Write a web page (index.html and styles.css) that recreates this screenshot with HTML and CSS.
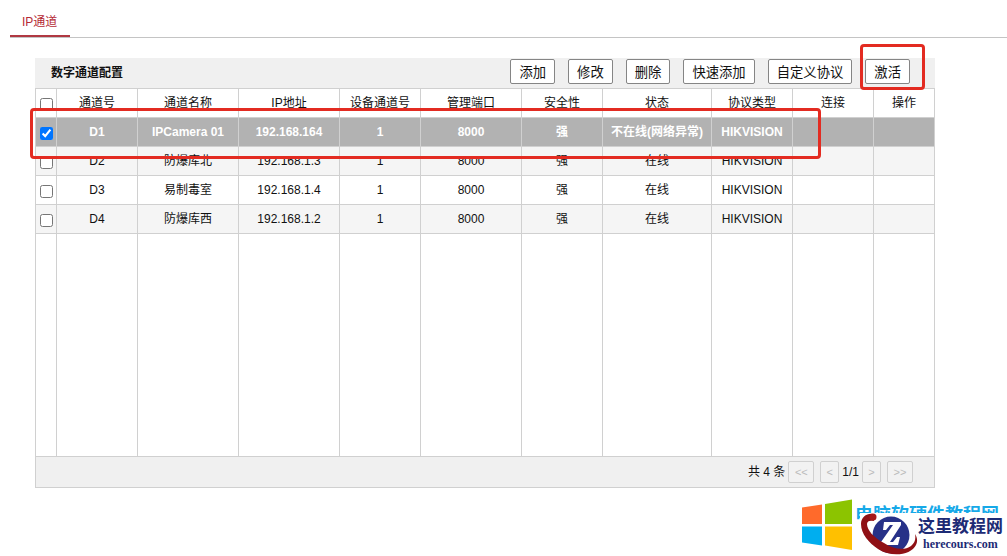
FILE: index.html
```html
<!DOCTYPE html>
<html lang="zh-CN">
<head>
<meta charset="utf-8">
<title>IP通道</title>
<link rel="stylesheet" href="styles.css">
</head>
<body>
<nav class="tabs"><a class="tab" href="#channels">IP通道</a></nav>

<main class="panel" id="channels">
  <header class="toolbar">
    <h1 class="title">数字通道配置</h1>
    <div class="actions">
      <button class="btn" type="button">添加</button>
      <button class="btn" type="button">修改</button>
      <button class="btn" type="button">删除</button>
      <button class="btn" type="button">快速添加</button>
      <button class="btn" type="button">自定义协议</button>
      <button class="btn" type="button">激活</button>
    </div>
  </header>

  <table class="channels">
    <colgroup>
      <col class="w-check"><col class="w-m"><col class="w-l"><col class="w-l"><col class="w-m"><col class="w-l"><col class="w-m"><col class="w-state"><col class="w-m"><col class="w-m"><col class="w-s">
    </colgroup>
    <thead>
      <tr><th><input class="check" type="checkbox" aria-label="全选"></th><th>通道号</th><th>通道名称</th><th>IP地址</th><th>设备通道号</th><th>管理端口</th><th>安全性</th><th>状态</th><th>协议类型</th><th>连接</th><th>操作</th></tr>
    </thead>
    <tbody>
      <tr class="selected"><td><input class="check" type="checkbox" aria-label="D1" checked></td><td>D1</td><td>IPCamera 01</td><td>192.168.164</td><td>1</td><td>8000</td><td>强</td><td>不在线(网络异常)</td><td>HIKVISION</td><td></td><td></td></tr>
      <tr class="alt"><td><input class="check" type="checkbox" aria-label="D2"></td><td>D2</td><td>防爆库北</td><td>192.168.1.3</td><td>1</td><td>8000</td><td>强</td><td>在线</td><td>HIKVISION</td><td></td><td></td></tr>
      <tr><td><input class="check" type="checkbox" aria-label="D3"></td><td>D3</td><td>易制毒室</td><td>192.168.1.4</td><td>1</td><td>8000</td><td>强</td><td>在线</td><td>HIKVISION</td><td></td><td></td></tr>
      <tr class="alt"><td><input class="check" type="checkbox" aria-label="D4"></td><td>D4</td><td>防爆库西</td><td>192.168.1.2</td><td>1</td><td>8000</td><td>强</td><td>在线</td><td>HIKVISION</td><td></td><td></td></tr>
      <tr class="filler"><td></td><td></td><td></td><td></td><td></td><td></td><td></td><td></td><td></td><td></td><td></td></tr>
    </tbody>
  </table>

  <footer class="pager">
    <span>共 4 条</span>
    <button class="page wide" type="button" disabled>&lt;&lt;</button>
    <button class="page gap" type="button" disabled>&lt;</button>
    <span>1/1</span>
    <button class="page" type="button" disabled>&gt;</button>
    <button class="page wide gap" type="button" disabled>&gt;&gt;</button>
  </footer>

  <div class="mark mark-row"></div>
  <div class="mark mark-button"></div>
</main>

<aside class="brands">
  <svg class="windows" viewBox="0 0 50 50" aria-hidden="true">
    <path fill="#ff6a2b" d="M0 8 20 5V24.500H0z"/>
    <path fill="#8cc400" d="M23 4.500 50 0V24.500H23z"/>
    <path fill="#00aeef" d="M0 27H20V46L0 43z"/>
    <path fill="#ffc000" d="M23 27H50V50.500L23 46z"/>
  </svg>
  <span class="site">电脑软硬件教程网</span>
  <div class="overlay">
    <svg class="globe" viewBox="0 0 58 42" aria-hidden="true">
      <circle cx="31" cy="22" r="18.500" fill="#273188"/>
      <path fill="#fff" d="M24 9H41V12L30 29H33L37 24H40L38 32H21V29L33 12H30L26 17H23z"/>
      <path fill="#8f1015" d="M13 1C7 0 1 4 1 11c0 10 8 19 17 25 14 9 33 6 38-4 2-4 1-8-1-11 1 5 0 9-4 12-7 5-18 3-27-3C14 25 7 17 7 11c0-3 3-4 7-3z"/>
      <circle cx="13" cy="4" r="3.500" fill="#a61a1b"/>
    </svg>
    <div class="words"><span class="name">这里教程网</span><span class="domain">herecours.com</span></div>
  </div>
</aside>
</body>
</html>
```

FILE: styles.css
```css
* { box-sizing: border-box; }
body {
  margin: 0;
  background: #fff;
  color: #111;
  font: 12px/16px "Liberation Sans", "Noto Sans CJK SC", sans-serif;
}
.tabs {
  display: flex;
  height: 38px;
  margin-left: 10px;
  border-bottom: 1px solid #c4c4c4;
}
.tab {
  min-width: 60px;
  padding: 14px 12px 0;
  margin-bottom: -1px;
  height: 37px;
  border-bottom: 2px solid #b03842;
  color: #b52a35;
  text-decoration: none;
}
.panel {
  position: relative;
  margin: 20px 72px 0 35px;
}
.toolbar {
  display: flex;
  align-items: flex-start;
  justify-content: space-between;
  height: 30px;
  padding: 1px 25px 0 16px;
  background: #f0f0f0;
}
.title { margin: 0; font-size: 12px; line-height: 28px; }
.actions { display: flex; gap: 13px; }
.btn {
  height: 25px;
  padding: 0 8px;
  border: 1px solid #858585;
  border-radius: 2px;
  background: #fff;
  color: #111;
  font-family: inherit;
}
.channels {
  width: 100%;
  table-layout: fixed;
  border-collapse: collapse;
}
.w-check { width: 21px; }
.w-s { width: 61px; }
.w-m { width: 81px; }
.w-l { width: 101px; }
.w-state { width: 109px; }
.channels th, .channels td {
  height: 29px;
  padding: 0;
  border: 1px solid #d0d0d0;
  font-weight: normal;
  text-align: center;
  white-space: nowrap;
}
.check {
  display: block;
  width: 13px;
  height: 13px;
  margin: 3px auto 0;
}
.alt { background: #f5f5f5; }
.channels .selected td {
  background: #b2b2b2;
  color: #fff;
  font-weight: bold;
}
.channels .filler td { height: 223px; }
.pager {
  display: flex;
  align-items: center;
  justify-content: flex-end;
  gap: 3px;
  height: 31px;
  padding-right: 21px;
  border: 1px solid #d0d0d0;
  border-top: 0;
  background: #f0f0f0;
}
.page {
  width: 19px;
  height: 22px;
  padding: 0;
  border: 1px solid #d0d0d0;
  border-radius: 2px;
  background: #f2f2f2;
  color: #bbb;
  font: 11px "Liberation Sans", sans-serif;
}
.wide { width: 26px; }
.gap { margin-left: 3px; }
.mark {
  position: absolute;
  border: 3px solid #e32b21;
  border-radius: 4px;
  pointer-events: none;
}
.mark-row { top: 50px; left: -5px; right: 114px; height: 51px; }
.mark-button { top: -14px; right: 10px; width: 65px; height: 46px; }
.brands {
  position: relative;
  display: flex;
  justify-content: flex-end;
  gap: 3px;
  height: 56px;
  padding: 0 8px 0 0;
  margin-top: 11px;
}
.windows { width: 50px; height: 51px; }
.site {
  padding-top: 4px;
  color: #16a9e8;
  font-size: 18px;
  font-weight: bold;
  line-height: 24px;
}
.overlay {
  position: absolute;
  top: 14px;
  right: 4px;
  display: flex;
  height: 42px;
  background: #fff;
}
.globe { flex: none; width: 58px; height: 42px; }
.words {
  display: flex;
  flex-direction: column;
  align-items: center;
  color: #1d2b75;
  font-weight: bold;
  white-space: nowrap;
}
.name { padding-top: 3px; font-size: 17px; line-height: 22px; }
.domain { font-family: "Liberation Serif", serif; font-size: 12px; line-height: 12px; }
```
